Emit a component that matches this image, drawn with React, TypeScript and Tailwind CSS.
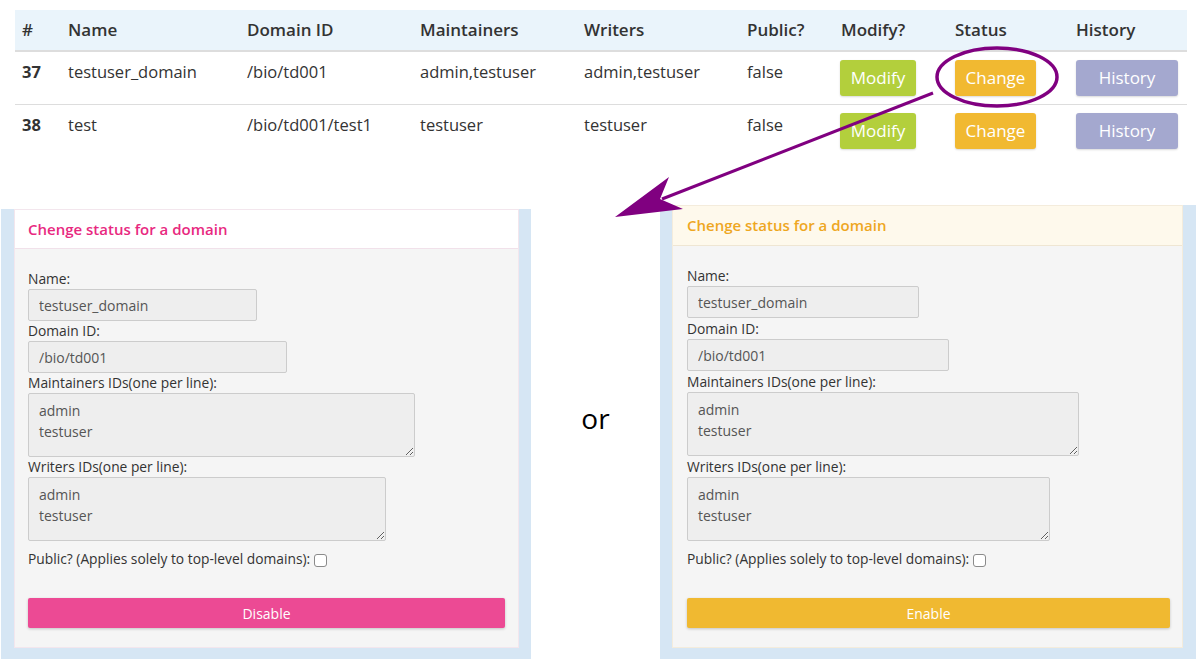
import React from 'react';

// column widths of the domain table (sum = 1172px)
const cols = 'grid grid-cols-[45px_179px_173px_164px_163px_94px_114px_121px_119px]';

type Row = {
  id: number;
  name: string;
  domain: string;
  maintainers: string;
  writers: string;
  isPublic: string;
};

const rows: Row[] = [
  { id: 37, name: 'testuser_domain', domain: '/bio/td001', maintainers: 'admin,testuser', writers: 'admin,testuser', isPublic: 'false' },
  { id: 38, name: 'test', domain: '/bio/td001/test1', maintainers: 'testuser', writers: 'testuser', isPublic: 'false' },
];

const headers = ['#', 'Name', 'Domain ID', 'Maintainers', 'Writers', 'Public?', 'Modify?', 'Status', 'History'];

const DomainTable: React.FC = () => (
  <div className="ml-[15px] mt-[10px] w-[1172px] text-[16.5px] text-[#333]">
    <div className={`${cols} h-[40px] items-center bg-[#eaf4fb] border-b-2 border-[#dddddd] box-content text-[17px] font-semibold`}>
      {headers.map((h, i) => (
        <div key={h} className={i === 0 ? 'pl-[7px]' : 'pl-2'}>{h}</div>
      ))}
    </div>
    {rows.map((r, idx) => (
      <div key={r.id} className={`${cols} h-[52px] leading-6 ${idx === 0 ? 'border-b border-[#dddddd] box-content' : ''}`}>
        <div className="pl-[7px] pt-2 font-bold">{r.id}</div>
        <div className="pl-2 pt-2">{r.name}</div>
        <div className="pl-2 pt-2">{r.domain}</div>
        <div className="pl-2 pt-2">{r.maintainers}</div>
        <div className="pl-2 pt-2">{r.writers}</div>
        <div className="pl-2 pt-2">{r.isPublic}</div>
        <div className="pl-[7px] pt-2">
          <button className="h-9 w-[76px] rounded-[3px] bg-[#b3cf3c] text-[17px] text-white shadow-[0_1px_2px_rgba(0,0,0,0.15)]">Modify</button>
        </div>
        <div className="pl-2 pt-2">
          <button className="h-9 w-[81px] rounded-[3px] bg-[#f1b931] text-[17px] text-white shadow-[0_1px_2px_rgba(0,0,0,0.15)]">Change</button>
        </div>
        <div className="pl-2 pt-2">
          <button className="h-9 w-[102px] rounded-[3px] bg-[#a4a8cf] text-[17px] text-white shadow-[0_1px_2px_rgba(0,0,0,0.15)]">History</button>
        </div>
      </div>
    ))}
  </div>
);

interface PanelProps {
  variant: 'disable' | 'enable';
  widths: [number, number, number, number];
}

const StatusPanel: React.FC<PanelProps> = ({ variant, widths }) => {
  const pink = variant === 'disable';
  const label = pink ? 'block leading-[20px]' : 'block leading-[21px]';
  const field = 'block h-[32px] rounded-[2px] border border-[#cccccc] bg-[#eeeeee] px-[10px] text-[14px] text-[#555] outline-none';
  const area = 'block h-[64px] rounded-[2px] border border-[#cccccc] bg-[#eeeeee] px-[10px] py-[6px] text-[14px] leading-[21px] text-[#555] outline-none resize';

  return (
    <div className={`flex h-full flex-col bg-[#d6e6f4] pb-[11px] ${pink ? 'pl-[13px] pr-[12px]' : 'pl-[12px] pr-[13px]'}`}>
      <div className={`flex flex-1 flex-col border bg-[#f5f5f5] ${pink ? 'border-[#f3e6ed]' : 'border-[#f4ecdc]'}`}>
        <div
          className={`flex items-center border-b text-[15px] font-semibold ${
            pink
              ? 'h-[39px] border-[#f1e1ea] bg-white px-[13px] text-[#e8297f]'
              : 'h-[40px] border-[#efe6d3] bg-[#fef9ec] px-[14px] text-[#eea71f]'
          }`}
        >
          Chenge status for a domain
        </div>
        <div className={`flex flex-1 flex-col pb-[19px] text-[13.8px] text-[#333] ${pink ? 'pl-[13px] pr-[13px] pt-[20px]' : 'pl-[14px] pr-[12px] pt-[19px]'}`}>
          <label className={label}>Name:</label>
          <input readOnly value="testuser_domain" className={field} style={{ width: widths[0] }} />
          <label className={label}>Domain ID:</label>
          <input readOnly value="/bio/td001" className={field} style={{ width: widths[1] }} />
          <label className={label}>Maintainers IDs(one per line):</label>
          <textarea readOnly value={'admin\ntestuser'} className={area} style={{ width: widths[2] }} />
          <label className={label}>Writers IDs(one per line):</label>
          <textarea readOnly value={'admin\ntestuser'} className={area} style={{ width: widths[3] }} />
          <div className="mt-[8px] flex items-center leading-[20px]">
            <span>Public? (Applies solely to top-level domains):</span>
            <span className="ml-[4px] mt-[3px] inline-block h-[13px] w-[13px] rounded-[3px] border border-[#8a8a8a] bg-white" />
          </div>
          <button
            className={`mt-auto h-[30px] w-full rounded-[2px] text-[14px] text-white shadow-[0_1px_3px_rgba(0,0,0,0.2)] ${
              pink ? 'bg-[#ec4a94]' : 'bg-[#f0b931]'
            }`}
          >
            {pink ? 'Disable' : 'Enable'}
          </button>
        </div>
      </div>
    </div>
  );
};

const Annotations: React.FC = () => (
  <svg className="pointer-events-none absolute inset-0" width={1197} height={659} viewBox="0 0 1197 659">
    <ellipse cx={997} cy={77} rx={60} ry={29} fill="none" stroke="#800080" strokeWidth={3.5} />
    <line x1={933} y1={93} x2={662} y2={199} stroke="#800080" strokeWidth={3} />
    <polygon points="615,217 669,177 660,199 683,209" fill="#800080" />
  </svg>
);

export default function App() {
  return (
    <div className="relative flex h-[659px] w-[1197px] flex-col overflow-hidden bg-white font-['Open_Sans',sans-serif]">
      <DomainTable />
      <div className="mt-[48px] flex flex-1 pl-[1px]">
        <div className="mt-[4px] w-[530px]">
          <StatusPanel variant="disable" widths={[229, 259, 387, 358]} />
        </div>
        <div className="flex w-[129px] justify-center">
          <span className="mt-[194px] text-[28px] leading-[38px] text-black">or</span>
        </div>
        <div className="w-[536px]">
          <StatusPanel variant="enable" widths={[232, 262, 392, 363]} />
        </div>
      </div>
      <Annotations />
    </div>
  );
}
